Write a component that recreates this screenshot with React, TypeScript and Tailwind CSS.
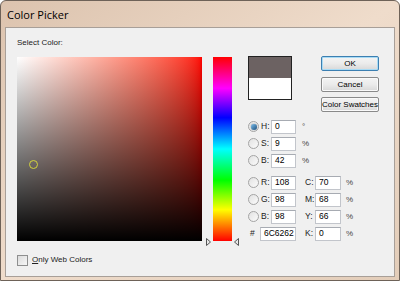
import { useState } from "react";

const ui = { fontFamily: '"Liberation Sans", Arial, sans-serif' };

const Radio = ({ on }: { on?: boolean }) => (
  <span className="relative flex h-[11px] w-[11px] shrink-0 items-center justify-center rounded-full border border-[#a4a4a4] bg-gradient-to-br from-[#e2e2e2] to-[#fbfbfb]">
    {on && <span className="h-[6px] w-[6px] rounded-full bg-gradient-to-br from-[#7cc0ee] to-[#1d4f7c] shadow-[0_0_1px_#123]" />}
  </span>
);

const Field = ({ value, w = "w-[25px]" }: { value: string; w?: string }) => (
  <div className={`${w} flex h-[14px] items-center overflow-hidden whitespace-nowrap border border-[#c2c5cb] border-t-[#a7abb2] bg-white pl-[3px] text-[8.5px] text-black`}>
    {value}
  </div>
);

const Btn = ({ label, def }: { label: string; def?: boolean }) => (
  <button
    className={`flex h-[15px] w-[58px] items-center justify-center whitespace-nowrap rounded-[2px] border p-0 text-[8px] text-black ${
      def ? "border-[#3c7fb1] shadow-[inset_0_0_0_1px_#a8dbf5]" : "border-[#8a8a8a] shadow-[inset_0_0_0_1px_#fafafa]"
    } bg-gradient-to-b from-[#f4f4f4] via-[#ebebeb] to-[#d8d8d8]`}
  >
    {label}
  </button>
);

const Row = ({
  label,
  value,
  unit,
  on,
  children,
}: {
  label: string;
  value: string;
  unit?: string;
  on?: boolean;
  children?: React.ReactNode;
}) => (
  <div className="flex h-[17px] items-center">
    <Radio on={on} />
    <span className="ml-[2px] w-[10px] text-[8.5px] text-[#222]">{label}</span>
    <Field value={value} />
    {unit !== undefined && <span className="ml-[6px] text-[8px] text-[#444]">{unit}</span>}
    {children}
  </div>
);

const Cmyk = ({ label, value }: { label: string; value: string }) => (
  <div className="ml-[9px] flex items-center">
    <span className="w-[10px] text-[8.5px] text-[#222]">{label}</span>
    <Field value={value} w="w-[26px]" />
    <span className="ml-[5px] text-[8px] text-[#444]">%</span>
  </div>
);

export default function App() {
  const [web, setWeb] = useState(false);
  return (
    <div
      className="flex h-[281px] w-[400px] flex-col rounded-t-[6px] border border-[#6e6258] bg-gradient-to-br from-[#dcc3ae] via-[#efdccb] to-[#e3cdb9] px-[4px] pb-[3px]"
      style={ui}
    >
      <div
        className="flex h-[26px] items-center pl-[2px] pt-[3px] text-[11px] text-black"
        style={{ fontFamily: '"Open Sans", "Noto Sans", sans-serif' }}
      >
        Color Picker
      </div>
      <div className="flex flex-1 flex-col border border-[#a89f98] bg-[#f0f0f0] pl-[11px]">
        <div className="mt-[10px] h-[10px] text-[8px] leading-[10px] text-[#222]">Select Color:</div>
        <div className="mt-[9px] flex items-start">
          {/* saturation / brightness field */}
          <div className="relative h-[184px] w-[185px] bg-gradient-to-r from-white to-[#ff0000]">
            <div className="absolute inset-0 bg-gradient-to-b from-transparent to-black" />
            <div className="absolute left-[12px] top-[103px] h-[9px] w-[9px] rounded-full border border-[#d4d43c]" />
          </div>
          {/* hue slider */}
          <div className="relative ml-[11px] h-[184px] w-[19px] bg-[linear-gradient(to_bottom,#ff0000,#ff00ff_17%,#0000ff_33%,#00ffff_50%,#00ff00_67%,#ffff00_83%,#ff0000)]">
            <svg className="absolute -left-[7px] bottom-[-5px]" width="5" height="8" viewBox="0 0 5 8">
              <path d="M0.5 0.5 L4.5 4 L0.5 7.5 Z" fill="#e8e8e8" stroke="#555" />
            </svg>
            <svg className="absolute -right-[7px] bottom-[-5px]" width="5" height="8" viewBox="0 0 5 8">
              <path d="M4.5 0.5 L0.5 4 L4.5 7.5 Z" fill="#e8e8e8" stroke="#555" />
            </svg>
          </div>
          {/* right side */}
          <div className="-mt-[1px] ml-[16px] flex flex-col">
            <div className="flex items-start">
              <div className="flex h-[44px] w-[44px] flex-col border border-[#222]">
                <div className="flex-1 bg-[#6c6262]" />
                <div className="flex-1 bg-white" />
              </div>
              <div className="ml-[29px] flex flex-col">
                <Btn label="OK" def />
                <div className="mt-[6px]">
                  <Btn label="Cancel" />
                </div>
                <div className="mt-[5px]">
                  <Btn label="Color Swatches" />
                </div>
              </div>
            </div>
            <div className="mt-[6px] flex flex-col">
              <Row label="H:" value="0" unit="°" on />
              <Row label="S:" value="9" unit="%" />
              <Row label="B:" value="42" unit="%" />
            </div>
            <div className="mt-[5px] flex flex-col">
              <Row label="R:" value="108">
                <Cmyk label="C:" value="70" />
              </Row>
              <Row label="G:" value="98">
                <Cmyk label="M:" value="68" />
              </Row>
              <Row label="B:" value="98">
                <Cmyk label="Y:" value="66" />
              </Row>
              <div className="flex h-[17px] items-center">
                <span className="w-[12px] pl-[2px] text-[8.5px] text-[#222]">#</span>
                <Field value="6C6262" w="w-[36px]" />
                <Cmyk label="K:" value="0" />
              </div>
            </div>
          </div>
        </div>
        <label className="mt-[12px] flex cursor-default items-center" onClick={() => setWeb(!web)}>
          <span className="flex h-[11px] w-[11px] items-center justify-center border border-[#8e8f8f] bg-gradient-to-br from-[#dcdcdc] to-[#f7f7f7] text-[8px] leading-none">
            {web ? "✓" : ""}
          </span>
          <span className="ml-[4px] text-[8px] text-[#222]">
            <span className="underline">O</span>nly Web Colors
          </span>
        </label>
      </div>
    </div>
  );
}
